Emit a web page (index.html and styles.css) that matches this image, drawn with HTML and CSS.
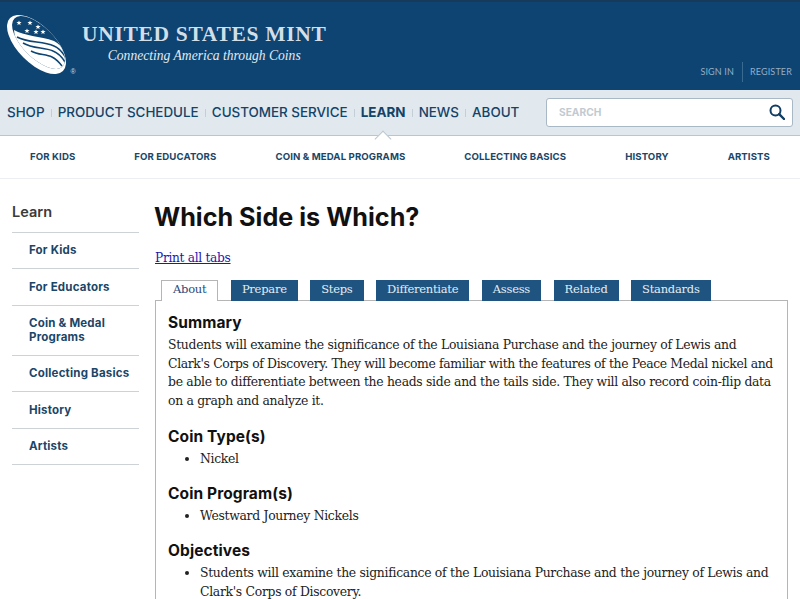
FILE: index.html
```html
<!DOCTYPE html>
<html lang="en">
<head>
<meta charset="utf-8">
<title>Which Side is Which?</title>
<link rel="stylesheet" href="styles.css">
</head>
<body>
<header class="masthead">
  <a class="brand" href="#">
    <svg class="coin" width="72" height="66" viewBox="5 12 72 66">
      <defs>
        <clipPath id="face"><ellipse cx="38.500" cy="42.500" rx="34" ry="15.500" transform="rotate(45 38.500 42.500)"/></clipPath>
        <polygon id="st" points="0,-2.600 .7,-.9 2.600,-.9 1.100,.3 1.600,2.300 0,1.100 -1.600,2.300 -1.100,.3 -2.600,-.9 -.7,-.9"/>
      </defs>
      <ellipse cx="36.500" cy="44.500" rx="37.400" ry="18.400" transform="rotate(45 36.500 44.500)" fill="#fff"/>
      <ellipse cx="38.500" cy="42.500" rx="34" ry="15.500" transform="rotate(45 38.500 42.500)" fill="#0e4572"/>
      <g clip-path="url(#face)">
        <path d="M14 30 C24 36 40 36 54 41 C60 44 64 50 68 58 L68 80 L20 80 Z" fill="#fff"/>
        <path d="M17 37 C28 43 42 41 54 46 C59 48 63 53 66 58 M23 43 C33 49 44 47 53 51 C58 53 62 57 65 62 M31 51 C38 55 46 54 52 57 C56 59 59 62 62 66" fill="none" stroke="#0e4572" stroke-width="1.500"/>
      </g>
      <g fill="#fff">
        <use href="#st" x="19" y="23"/><use href="#st" x="30" y="23"/><use href="#st" x="38" y="27"/>
        <use href="#st" x="43" y="32"/><use href="#st" x="27" y="31"/><use href="#st" x="36" y="32"/>
      </g>
      <text x="73" y="74" class="reg">®</text>
    </svg>
    <span class="wordmark">
      <span class="wordmark-title">UNITED STATES MINT</span>
      <span class="wordmark-tag">Connecting America through Coins</span>
    </span>
  </a>
  <nav class="account">
    <a href="#">SIGN IN</a>
    <a href="#">REGISTER</a>
  </nav>
</header>

<div class="mainbar">
  <nav class="primary">
    <a href="#">SHOP</a>
    <a href="#">PRODUCT SCHEDULE</a>
    <a href="#">CUSTOMER SERVICE</a>
    <a href="#" class="current">LEARN</a>
    <a href="#">NEWS</a>
    <a href="#">ABOUT</a>
  </nav>
  <form class="search">
    <span class="search-hint">SEARCH</span>
    <svg width="16" height="16" viewBox="0 0 16 16"><circle cx="6.500" cy="6.500" r="5" fill="none" stroke="#0f3d63" stroke-width="2"/><path d="M10.200 10.200 L15 15" stroke="#0f3d63" stroke-width="2.400" stroke-linecap="round"/></svg>
  </form>
</div>

<nav class="subnav">
  <a href="#">FOR KIDS</a>
  <a href="#">FOR EDUCATORS</a>
  <a href="#">COIN &amp; MEDAL PROGRAMS</a>
  <a href="#">COLLECTING BASICS</a>
  <a href="#">HISTORY</a>
  <a href="#">ARTISTS</a>
</nav>

<div class="page">
  <aside class="sidebar">
    <h2>Learn</h2>
    <ul>
      <li><a href="#">For Kids</a></li>
      <li><a href="#">For Educators</a></li>
      <li><a href="#">Coin &amp; Medal Programs</a></li>
      <li><a href="#">Collecting Basics</a></li>
      <li><a href="#">History</a></li>
      <li><a href="#">Artists</a></li>
    </ul>
  </aside>
  <main class="content">
    <h1>Which Side is Which?</h1>
    <a class="print" href="#">Print all tabs</a>
    <div class="tabs">
      <a href="#" class="tab active">About</a>
      <a href="#" class="tab">Prepare</a>
      <a href="#" class="tab">Steps</a>
      <a href="#" class="tab">Differentiate</a>
      <a href="#" class="tab">Assess</a>
      <a href="#" class="tab">Related</a>
      <a href="#" class="tab">Standards</a>
    </div>
    <section class="panel">
      <h3>Summary</h3>
      <p>Students will examine the significance of the Louisiana Purchase and the journey of Lewis and<br>
      <span class="line-tight">Clark's Corps of Discovery. They will become familiar with the features of the Peace Medal nickel and</span><br>
      be able to differentiate between the heads side and the tails side. They will also record coin-flip data<br>
      on a graph and analyze it.</p>
      <h3>Coin Type(s)</h3>
      <ul><li>Nickel</li></ul>
      <h3>Coin Program(s)</h3>
      <ul><li>Westward Journey Nickels</li></ul>
      <h3>Objectives</h3>
      <ul><li>Students will examine the significance of the Louisiana Purchase and the journey of Lewis and Clark's Corps of Discovery.</li></ul>
    </section>
  </main>
</div>
</body>
</html>
```
FILE: styles.css
```css
* { box-sizing: border-box; }
html, body { margin: 0; height: 599px; overflow: hidden; background: #fff; }
body { font-family: "DejaVu Serif", serif; color: #222; }
a { text-decoration: none; }

.masthead {
  height: 90px;
  background: #0d4472;
  border-top: 2px solid #17395a;
  display: flex;
  justify-content: space-between;
  padding-left: 5px;
}
.brand { display: flex; align-items: flex-start; }
.coin { margin-top: 10px; flex: none; }
.reg { font: 7px "Liberation Sans", sans-serif; fill: #cfdbe5; text-anchor: middle; }
.wordmark { display: flex; flex-direction: column; align-items: center; margin: 20px 0 0 5px; }
.wordmark-title {
  font: bold 21.500px/24px "Liberation Serif", serif;
  letter-spacing: .68px;
  color: #d3dfe8;
  white-space: nowrap;
}
.wordmark-tag {
  font: italic 13.600px/18px "Liberation Serif", serif;
  color: #e3ebf1;
  margin-top: 1px;
  white-space: nowrap;
}
.account { display: flex; align-items: center; align-self: flex-end; height: 20px; margin-bottom: 8px; padding-right: 8px; }
.account a { font: 9px/20px "Lato", sans-serif; letter-spacing: .15px; color: #93aec5; }
.account a + a { border-left: 1px solid #3b6a91; margin-left: 8px; padding-left: 7px; }

.mainbar {
  height: 46px;
  background: #e1e8ee;
  border-bottom: 1px solid #b9c5cf;
  display: flex;
  justify-content: space-between;
  align-items: center;
  padding: 0 7px;
}
.primary { display: flex; align-items: center; margin-top: -2px; }
.primary a {
  font: 500 13.400px/16px "Inter", sans-serif;
  color: #124368;
  white-space: nowrap;
  position: relative;
}
.primary a + a { margin-left: 13.200px; }
.primary a + a::before {
  content: "";
  position: absolute;
  left: -7px;
  top: 5px;
  height: 8px;
  border-left: 1px solid #c3ced7;
}
.primary a.current { font-weight: 700; }
.primary a.current::after {
  content: "";
  position: absolute;
  left: 16px;
  top: 29px;
  width: 11px;
  height: 11px;
  background: #fff;
  border-left: 1px solid #b9c5cf;
  border-top: 1px solid #b9c5cf;
  transform: rotate(45deg);
}
.search {
  width: 247px;
  height: 29px;
  margin-top: -1px;
  background: #fff;
  border: 1px solid #a9b8c5;
  border-radius: 3px;
  display: flex;
  justify-content: space-between;
  align-items: center;
  padding: 0 7px 0 12px;
}
.search-hint { font: 700 10.200px/14px "Inter", sans-serif; color: #c2cad1; }

.subnav {
  height: 43px;
  border-bottom: 1px solid #eceff2;
  display: flex;
  justify-content: space-between;
  align-items: center;
  padding: 0 30px;
}
.subnav a { font: 700 9.650px/12px "Inter", sans-serif; letter-spacing: .1px; color: #1a4668; white-space: nowrap; }

.page { display: flex; padding-left: 12px; }
.sidebar { width: 127px; flex: none; padding-top: 24px; }
.sidebar h2 { margin: 0; font: 600 14.500px/18px "Inter", sans-serif; color: #3a3a3a; padding-bottom: 10.500px; border-bottom: 1px solid #ccd2d6; }
.sidebar ul { list-style: none; margin: 0; padding: 0; }
.sidebar li { border-bottom: 1px solid #ccd2d6; padding: 11.500px 8px 10.500px 17px; }
.sidebar a { display: block; font: 700 11.500px/13.500px "Inter", sans-serif; letter-spacing: .2px; color: #1a4668; }

.content { width: 633px; margin-left: 16px; flex: none; }
.content h1 { margin: 0 0 0 -1px; padding-top: 21px; font: 700 25.200px/34px "Inter", sans-serif; color: #111; }
.print { display: block; margin-top: 15px; font-size: 12.200px; letter-spacing: -.3px; line-height: 18px; color: #1a1ab0; text-decoration: underline; }
.tabs { display: flex; gap: 12.500px; margin: 13px 0 -1px 6px; position: relative; z-index: 1; }
.tab {
  height: 21px;
  padding: 0 10px;
  font-size: 11.500px;
  letter-spacing: -.25px;
  line-height: 17px;
  color: #e4edf4;
  background: #1f5480;
  border: 1px solid #1f5480;
  border-bottom: 0;
}
.tab.active { background: #fff; color: #2c4a7c; border-color: #b5b5b5; padding: 0 11px; }
.panel { border: 1px solid #b5b5b5; border-bottom: 0; padding: 12px 12px 0; height: 400px; }
.panel h3 { margin: 0; font: 700 15.500px/20px "Inter", sans-serif; letter-spacing: .1px; color: #111; }
.panel p { margin: 3px 0 16px; font-size: 12.400px; letter-spacing: -.3px; line-height: 18.700px; color: #222; white-space: nowrap; }
.line-tight { letter-spacing: -.35px; }
.panel ul { margin: 3px 0 15.500px; padding-left: 32px; font-size: 12.400px; letter-spacing: -.3px; line-height: 18.700px; }
```
